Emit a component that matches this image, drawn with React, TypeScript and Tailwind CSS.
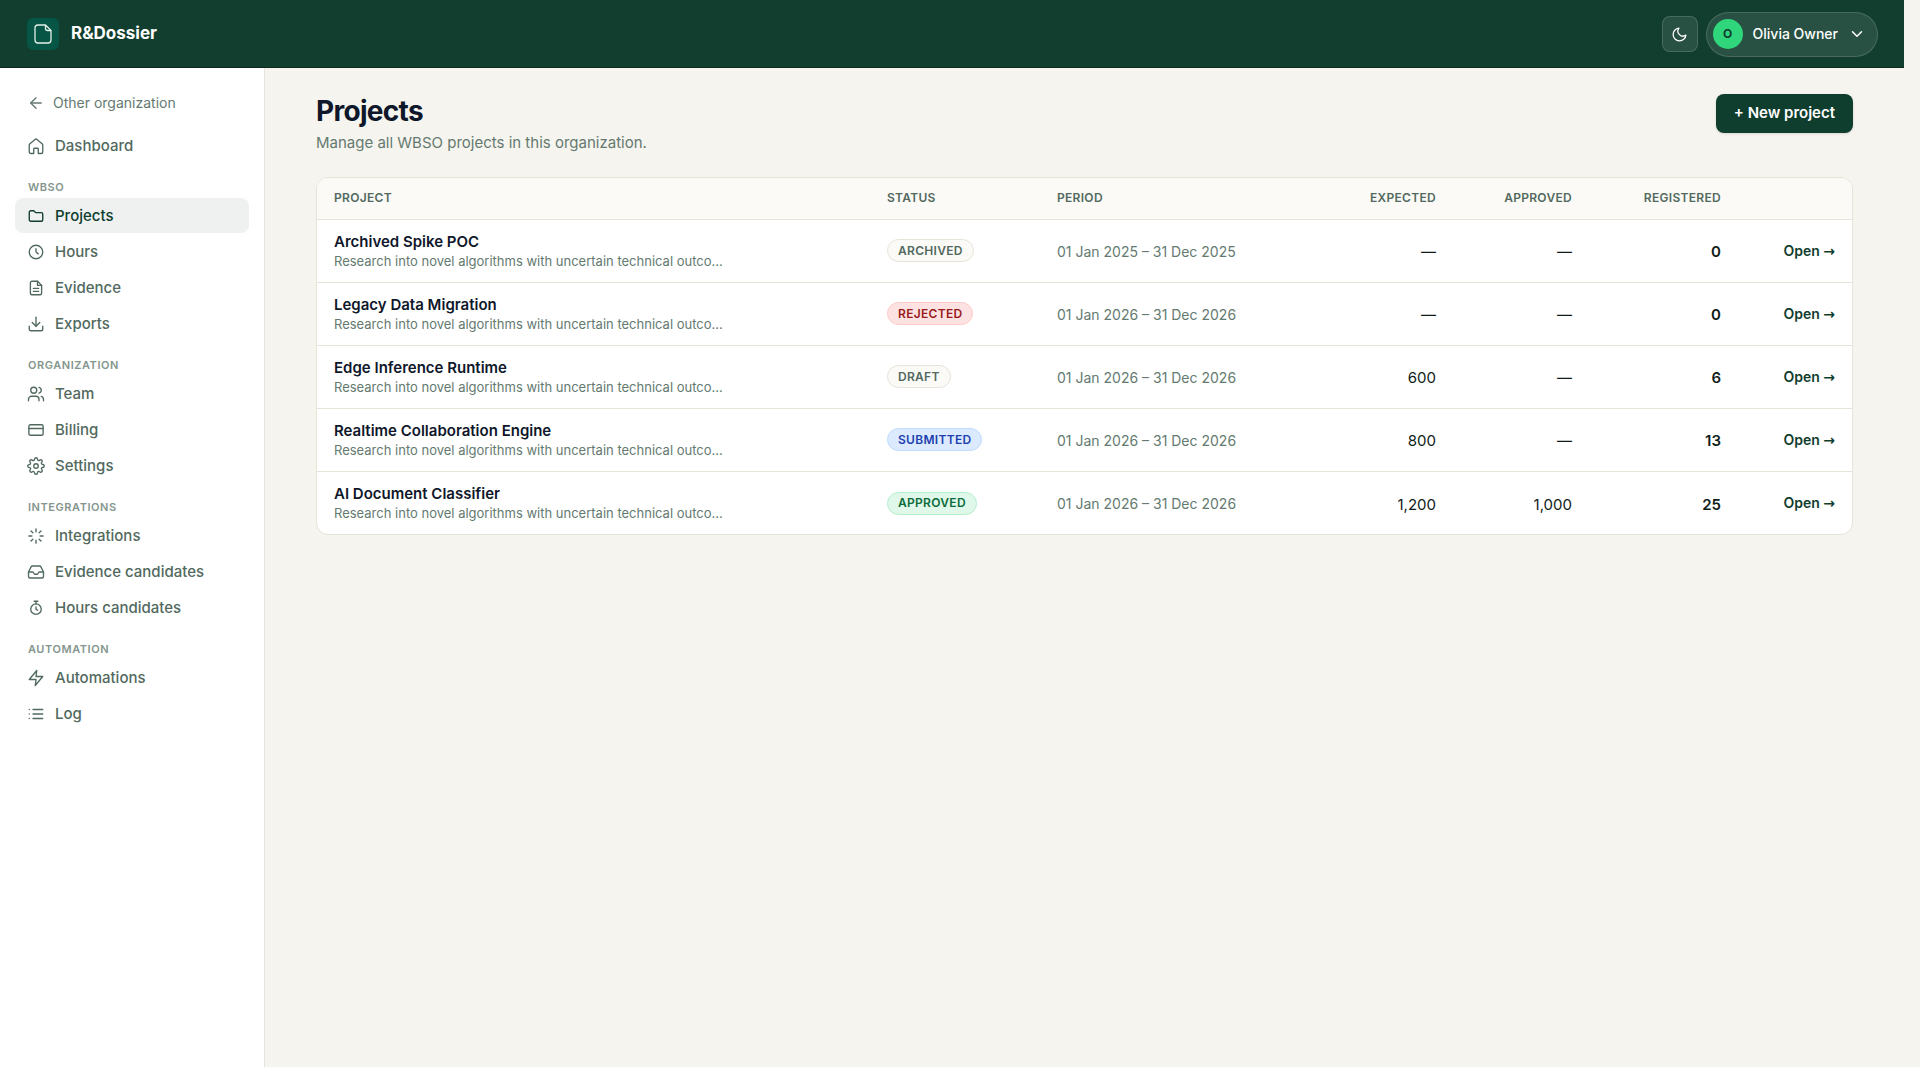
import React from 'react';
import { ArrowLeft, Download, Users, Inbox, ChevronDown } from 'lucide-react';

type IconProps = { size?: number; strokeWidth?: number };
type IconType = React.ComponentType<IconProps>;
type NavItem = { label: string; icon: IconType; active?: boolean };
type NavGroup = { title: string; items: NavItem[] };

const lineIcon = (shapes: React.ReactNode): IconType => ({ size = 18, strokeWidth = 1.8 }) => (
  <svg width={size} height={size} viewBox="0 0 24 24" fill="none" stroke="currentColor" strokeWidth={strokeWidth} strokeLinecap="round" strokeLinejoin="round" aria-hidden="true">
    {shapes}
  </svg>
);

const HomeIcon = lineIcon(<path d="M3 11a2.5 2.5 0 0 1 .9-1.9l6.8-5.8a2 2 0 0 1 2.6 0l6.8 5.8A2.5 2.5 0 0 1 21 11v9a2 2 0 0 1-2 2h-3.500a.5.5 0 0 1-.5-.5V16a1 1 0 0 0-1-1h-4a1 1 0 0 0-1 1v5.500a.5.5 0 0 1-.5.5H5a2 2 0 0 1-2-2z" />);
const FolderIcon = lineIcon(<path d="M3 7a2 2 0 0 1 2-2h4l2.5 2.5H19a2 2 0 0 1 2 2V17a2 2 0 0 1-2 2H5a2 2 0 0 1-2-2z" />);
const ClockIcon = lineIcon(
  <>
    <circle cx="12" cy="12" r="9" />
    <path d="M12 7.5V12l3 2.5" />
  </>
);
const DocumentIcon = lineIcon(
  <>
    <path d="M14 3H6.5a2 2 0 0 0-2 2v14a2 2 0 0 0 2 2h11a2 2 0 0 0 2-2V8.5z" />
    <path d="M14 3v5.5h5.5M8.5 12.5h7M8.5 16.5h7" />
  </>
);
const CardIcon = lineIcon(
  <>
    <rect x="2.5" y="5" width="19" height="14" rx="2" />
    <path d="M2.5 10h19" />
  </>
);
const GearIcon = lineIcon(
  <>
    <circle cx="12" cy="12" r="3" />
    <path d="M19.4 15a1.65 1.65 0 0 0 .33 1.82l.06.06a2 2 0 0 1 0 2.83 2 2 0 0 1-2.83 0l-.06-.06a1.65 1.65 0 0 0-1.82-.33 1.65 1.65 0 0 0-1 1.51V21a2 2 0 0 1-2 2 2 2 0 0 1-2-2v-.09A1.65 1.65 0 0 0 9 19.4a1.65 1.65 0 0 0-1.82.33l-.06.06a2 2 0 0 1-2.83 0 2 2 0 0 1 0-2.83l.06-.06a1.65 1.65 0 0 0 .33-1.82 1.65 1.65 0 0 0-1.51-1H3a2 2 0 0 1-2-2 2 2 0 0 1 2-2h.09A1.65 1.65 0 0 0 4.6 9a1.65 1.65 0 0 0-.33-1.82l-.06-.06a2 2 0 0 1 0-2.83 2 2 0 0 1 2.83 0l.06.06a1.65 1.65 0 0 0 1.82.33H9a1.65 1.65 0 0 0 1-1.51V3a2 2 0 0 1 2-2 2 2 0 0 1 2 2v.09a1.65 1.65 0 0 0 1 1.51 1.65 1.65 0 0 0 1.82-.33l.06-.06a2 2 0 0 1 2.83 0 2 2 0 0 1 0 2.83l-.06.06a1.65 1.65 0 0 0-.33 1.82V9a1.65 1.65 0 0 0 1.51 1H21a2 2 0 0 1 2 2 2 2 0 0 1-2 2h-.09a1.65 1.65 0 0 0-1.51 1z" />
  </>
);
const RaysIcon = lineIcon(<path d="M12 2.5v4M12 17.5v4M2.5 12h4M17.5 12h4M5.3 5.3l2.5 2.5M16.2 16.2l2.5 2.5M5.3 18.7l2.5-2.5M16.2 7.8l2.5-2.5" />);
const StopwatchIcon = lineIcon(
  <>
    <circle cx="12" cy="13.5" r="7" />
    <path d="M9.5 3h5M12 3v3.500M12 10.5v3l2 1.5" />
  </>
);
const BoltIcon = lineIcon(<path d="M13 2 3 14h9l-1 8 10-12h-9z" />);
const ListIcon = lineIcon(<path d="M8 6h13M8 12h13M8 18h13M3 6h.01M3 12h.01M3 18h.01" />);
const MoonIcon = lineIcon(<path d="M21 12.8A9 9 0 1 1 11.2 3 7 7 0 0 0 21 12.8z" />);

const navGroups: NavGroup[] = [
  {
    title: 'WBSO',
    items: [
      { label: 'Projects', icon: FolderIcon, active: true },
      { label: 'Hours', icon: ClockIcon },
      { label: 'Evidence', icon: DocumentIcon },
      { label: 'Exports', icon: Download },
    ],
  },
  {
    title: 'Organization',
    items: [
      { label: 'Team', icon: Users },
      { label: 'Billing', icon: CardIcon },
      { label: 'Settings', icon: GearIcon },
    ],
  },
  {
    title: 'Integrations',
    items: [
      { label: 'Integrations', icon: RaysIcon },
      { label: 'Evidence candidates', icon: Inbox },
      { label: 'Hours candidates', icon: StopwatchIcon },
    ],
  },
  {
    title: 'Automation',
    items: [
      { label: 'Automations', icon: BoltIcon },
      { label: 'Log', icon: ListIcon },
    ],
  },
];

const description = 'Research into novel algorithms with uncertain technical outco...';

const statusStyles: Record<string, string> = {
  Archived: 'bg-[#fbfaf6] border-[#e6e3d8] text-[#52695e]',
  Draft: 'bg-[#fbfaf6] border-[#e6e3d8] text-[#52695e]',
  Rejected: 'bg-[#fee2e2] border-[#fecaca] text-[#991b1b]',
  Submitted: 'bg-[#dbeafe] border-[#bfdbfe] text-[#1e40af]',
  Approved: 'bg-[#dff8e9] border-[#b4efcb] text-[#0b6b3c]',
};

const projects = [
  { name: 'Archived Spike POC', status: 'Archived', period: '01 Jan 2025 – 31 Dec 2025', expected: '—', approved: '—', registered: '0' },
  { name: 'Legacy Data Migration', status: 'Rejected', period: '01 Jan 2026 – 31 Dec 2026', expected: '—', approved: '—', registered: '0' },
  { name: 'Edge Inference Runtime', status: 'Draft', period: '01 Jan 2026 – 31 Dec 2026', expected: '600', approved: '—', registered: '6' },
  { name: 'Realtime Collaboration Engine', status: 'Submitted', period: '01 Jan 2026 – 31 Dec 2026', expected: '800', approved: '—', registered: '13' },
  { name: 'AI Document Classifier', status: 'Approved', period: '01 Jan 2026 – 31 Dec 2026', expected: '1,200', approved: '1,000', registered: '25' },
];

const NavLink: React.FC<NavItem> = ({ label, icon: Icon, active }) => (
  <a
    href="#"
    aria-current={active ? 'page' : undefined}
    className={`flex h-[35px] items-center gap-[10px] rounded-lg px-3 text-[15px] font-medium ${active ? 'bg-[#eef1f0] text-[#0f3d2e]' : 'text-[#52695e]'}`}
  >
    <Icon size={18} strokeWidth={1.8} />
    <span className="pt-px">{label}</span>
  </a>
);

const Header: React.FC = () => (
  <header className="flex h-[68px] items-center justify-between border-b border-[#0a2b1f] bg-[#113e2e] pt-px pr-[26px] pl-[27px]">
    <a href="#" className="flex items-center gap-3 text-[17px] font-bold text-white">
      <span className="flex size-8 items-center justify-center rounded-md bg-[#065545]">
        <svg width="18" height="20" viewBox="0 0 18 20" fill="none" stroke="#e3efe9" strokeWidth="1.3" strokeLinejoin="round" aria-hidden="true">
          <path d="M11.5 1H4a3 3 0 0 0-3 3v12a3 3 0 0 0 3 3h10a3 3 0 0 0 3-3V6.5z" />
          <path d="M11.5 1v3.500a2 2 0 0 0 2 2H17" />
        </svg>
      </span>
      R&amp;Dossier
    </a>
    <div className="flex items-center gap-2">
      <button type="button" aria-label="Toggle theme" className="flex size-9 items-center justify-center rounded-lg border border-white/15 bg-white/10 text-white">
        <MoonIcon size={17} />
      </button>
      <button type="button" className="flex h-[45px] items-center gap-[10px] rounded-full border border-white/15 bg-white/10 pr-[11px] pl-[6px] text-sm font-medium text-white">
        <span className="flex size-[30px] items-center justify-center rounded-full bg-[#2fd67b] text-xs font-bold text-[#0f3d2e]">O</span>
        Olivia Owner
        <ChevronDown size={18} strokeWidth={2} />
      </button>
    </div>
  </header>
);

const Sidebar: React.FC = () => (
  <aside className="w-[265px] shrink-0 border-r border-[#e6e3d8] bg-white px-[15px] pt-[17px]">
    <a href="#" className="flex h-[35px] items-center gap-2 px-3 text-sm text-[#647a70]">
      <ArrowLeft size={18} strokeWidth={1.8} />
      Other organization
    </a>
    <nav className="mt-2 flex flex-col">
      <NavLink label="Dashboard" icon={HomeIcon} />
      {navGroups.map((group) => (
        <div key={group.title} className="mt-[15px] flex flex-col gap-px">
          <h2 className="mb-px px-[13px] text-[11px] leading-[18px] font-semibold tracking-wider text-[#84968d] uppercase">{group.title}</h2>
          {group.items.map((item) => (
            <NavLink key={item.label} {...item} />
          ))}
        </div>
      ))}
    </nav>
  </aside>
);

const ProjectsTable: React.FC = () => (
  <div className="mt-6 overflow-hidden rounded-xl border border-[#e6e3d8] bg-white">
    <table className="w-full table-fixed text-left text-[15px] text-[#101c17]">
      <colgroup>
        <col />
        <col className="w-[170px]" />
        <col className="w-[213px]" />
        <col className="w-[200px]" />
        <col className="w-[136px]" />
        <col className="w-[149px]" />
        <col className="w-[114px]" />
      </colgroup>
      <thead className="bg-[#fbfaf6] text-xs tracking-wide text-[#52695e] uppercase">
        <tr className="h-[41px] *:px-[17px] *:font-semibold">
          <th>Project</th>
          <th>Status</th>
          <th>Period</th>
          <th className="text-right">Expected</th>
          <th className="text-right">Approved</th>
          <th className="text-right">Registered</th>
          <th aria-label="Actions" />
        </tr>
      </thead>
      <tbody>
        {projects.map((project) => (
          <tr key={project.name} className="h-[63px] border-t border-[#e6e3d8] *:px-[17px]">
            <td>
              <div className="leading-5 font-semibold text-[#0f172a]">{project.name}</div>
              <div className="text-[13px] leading-[18px] text-[#647a70]">{description}</div>
            </td>
            <td>
              <span className={`inline-flex h-[23px] items-center rounded-full border px-[10px] text-xs font-semibold tracking-wide uppercase ${statusStyles[project.status]}`}>
                {project.status}
              </span>
            </td>
            <td className="pt-0.5 text-sm whitespace-nowrap text-[#647a70]">{project.period}</td>
            <td className="pt-1 text-right">{project.expected}</td>
            <td className="pt-1 text-right">{project.approved}</td>
            <td className="pt-1 text-right font-semibold">{project.registered}</td>
            <td className="text-right text-sm font-semibold whitespace-nowrap text-[#0f3d2e]">
              <a href="#">
                Open <span className="font-['DejaVu_Sans',sans-serif]">→</span>
              </a>
            </td>
          </tr>
        ))}
      </tbody>
    </table>
  </div>
);

const App: React.FC = () => {
  return (
    <div className="flex min-h-screen flex-col bg-[#f6f4ef] pr-4 font-['Inter',sans-serif]">
      <Header />
      <div className="flex grow">
        <Sidebar />
        <main className="min-w-0 grow px-[51px] pt-[26px]">
          <div className="flex items-start justify-between">
            <div>
              <h1 className="text-[28px] leading-[34px] font-bold tracking-tight text-[#0f172a]">Projects</h1>
              <p className="mt-[5px] text-[15px] leading-5 text-[#647a70]">Manage all WBSO projects in this organization.</p>
            </div>
            <button type="button" className="h-[39px] rounded-lg bg-[#0f3d2e] px-[18px] text-[15px] font-semibold text-white shadow-sm">
              + New project
            </button>
          </div>
          <ProjectsTable />
        </main>
      </div>
    </div>
  );
};

export default App;
